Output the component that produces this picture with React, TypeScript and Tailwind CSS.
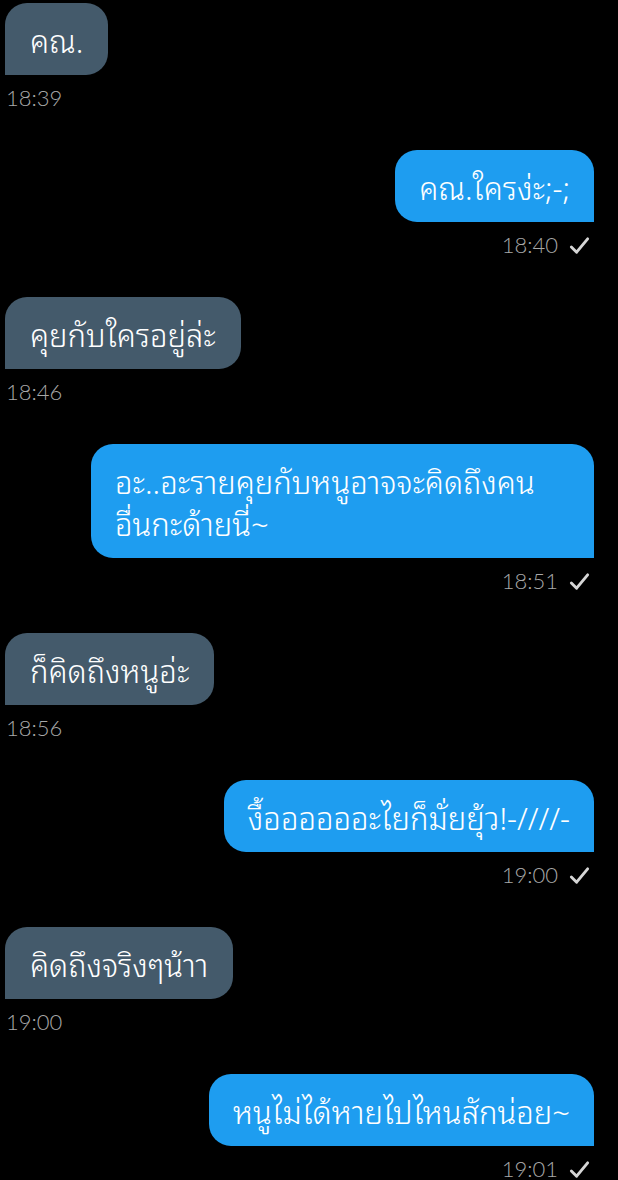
type Msg = { side: 'in' | 'out'; text: string; time: string }

const MESSAGES: Msg[] = [
  { side: 'in', text: 'คณ.', time: '18:39' },
  { side: 'out', text: 'คณ.ใครง่ะ;-;', time: '18:40' },
  { side: 'in', text: 'คุยกับใครอยู่ล่ะ', time: '18:46' },
  { side: 'out', text: 'อะ..อะรายคุยกับหนูอาจจะคิดถึงคน\nอื่นกะด้ายนี่~', time: '18:51' },
  { side: 'in', text: 'ก็คิดถึงหนูอ่ะ', time: '18:56' },
  { side: 'out', text: 'งื้ออออออะไยก็มั่ยยุ้ว!-////-', time: '19:00' },
  { side: 'in', text: 'คิดถึงจริงๆน้าา', time: '19:00' },
  { side: 'out', text: 'หนูไม่ได้หายไปไหนสักน่อย~', time: '19:01' },
]

const THAI = { fontFamily: '"Noto Sans Thai Looped", "Noto Sans Thai", "Loma", "Garuda", "Noto Sans", sans-serif' }
const TIME = { fontFamily: 'Lato, "Noto Sans", sans-serif' }

function Tick() {
  return (
    <svg viewBox="0 0 24 24" className="w-[23px] h-[23px]" fill="none" stroke="#d6d6d6" strokeWidth={3} strokeLinecap="round" strokeLinejoin="round">
      <path d="M3.5 13.5 L9 19 L20.5 5" />
    </svg>
  )
}

function Bubble({ msg }: { msg: Msg }) {
  const out = msg.side === 'out'
  const multi = msg.text.includes('\n')
  return (
    <div className={out ? 'flex flex-col items-end' : 'flex flex-col items-start'}>
      <div
        className={
          (out
            ? 'bg-[#1e9df0] rounded-[22px] rounded-br-none px-[24px] '
            : 'bg-[#445a6b] rounded-[22px] rounded-bl-none px-[25px] ') +
          (multi ? 'w-[503px] ' : '') +
          'py-[15px] text-white text-[31px] font-light leading-[42px] whitespace-pre'
        }
        style={THAI}
      >
        {msg.text}
      </div>
      <div
        className={out ? 'mt-[9px] flex items-center gap-[10px] pr-[3px]' : 'mt-[9px] flex items-center pl-[1px]'}
      >
        <span className="text-[22px] leading-[28px] font-light text-[#a8a8a8]" style={TIME}>{msg.time}</span>
        {out && <Tick />}
      </div>
    </div>
  )
}

export default function App() {
  return (
    <div className="min-h-[1180px] w-[618px] bg-black pt-[3px] pl-[5px] pr-[24px] flex flex-col gap-[38px] overflow-hidden">
      {MESSAGES.map((m, i) => (
        <Bubble key={i} msg={m} />
      ))}
    </div>
  )
}
